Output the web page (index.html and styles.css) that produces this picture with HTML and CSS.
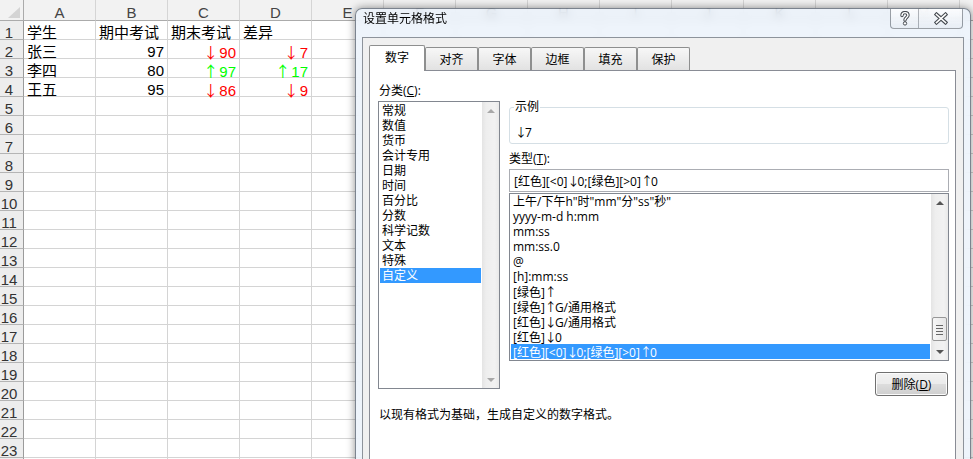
FILE: index.html
```html
<!DOCTYPE html>
<html lang="zh-CN">
<head>
<meta charset="utf-8">
<title>设置单元格格式</title>
<link rel="stylesheet" href="styles.css">
</head>
<body>
<div class="sheet">
  <div class="corner"></div>
  <div class="ch">A</div><div class="ch">B</div><div class="ch">C</div><div class="ch">D</div><div class="ch">E</div><div class="ch">F</div><div class="ch">G</div><div class="ch">H</div><div class="ch">I</div><div class="ch">J</div><div class="ch">K</div><div class="ch">L</div><div class="ch">M</div><div class="ch">N</div>

  <div class="rh">1</div><div>学生</div><div>期中考试</div><div>期末考试</div><div>差异</div><div></div><div></div><div></div><div></div><div></div><div></div><div></div><div></div><div></div><div></div>
  <div class="rh">2</div><div>张三</div><div class="n">97</div><div class="n red"><span class="ar">↓</span>90</div><div class="n red"><span class="ar">↓</span>7</div><div></div><div></div><div></div><div></div><div></div><div></div><div></div><div></div><div></div><div></div>
  <div class="rh">3</div><div>李四</div><div class="n">80</div><div class="n green"><span class="ar">↑</span>97</div><div class="n green"><span class="ar">↑</span>17</div><div></div><div></div><div></div><div></div><div></div><div></div><div></div><div></div><div></div><div></div>
  <div class="rh">4</div><div>王五</div><div class="n">95</div><div class="n red"><span class="ar">↓</span>86</div><div class="n red"><span class="ar">↓</span>9</div><div></div><div></div><div></div><div></div><div></div><div></div><div></div><div></div><div></div><div></div>
  <div class="rh">5</div><div></div><div></div><div></div><div></div><div></div><div></div><div></div><div></div><div></div><div></div><div></div><div></div><div></div><div></div>
  <div class="rh">6</div><div></div><div></div><div></div><div></div><div></div><div></div><div></div><div></div><div></div><div></div><div></div><div></div><div></div><div></div>
  <div class="rh">7</div><div></div><div></div><div></div><div></div><div></div><div></div><div></div><div></div><div></div><div></div><div></div><div></div><div></div><div></div>
  <div class="rh">8</div><div></div><div></div><div></div><div></div><div></div><div></div><div></div><div></div><div></div><div></div><div></div><div></div><div></div><div></div>
  <div class="rh">9</div><div></div><div></div><div></div><div></div><div></div><div></div><div></div><div></div><div></div><div></div><div></div><div></div><div></div><div></div>
  <div class="rh">10</div><div></div><div></div><div></div><div></div><div></div><div></div><div></div><div></div><div></div><div></div><div></div><div></div><div></div><div></div>
  <div class="rh">11</div><div></div><div></div><div></div><div></div><div></div><div></div><div></div><div></div><div></div><div></div><div></div><div></div><div></div><div></div>
  <div class="rh">12</div><div></div><div></div><div></div><div></div><div></div><div></div><div></div><div></div><div></div><div></div><div></div><div></div><div></div><div></div>
  <div class="rh">13</div><div></div><div></div><div></div><div></div><div></div><div></div><div></div><div></div><div></div><div></div><div></div><div></div><div></div><div></div>
  <div class="rh">14</div><div></div><div></div><div></div><div></div><div></div><div></div><div></div><div></div><div></div><div></div><div></div><div></div><div></div><div></div>
  <div class="rh">15</div><div></div><div></div><div></div><div></div><div></div><div></div><div></div><div></div><div></div><div></div><div></div><div></div><div></div><div></div>
  <div class="rh">16</div><div></div><div></div><div></div><div></div><div></div><div></div><div></div><div></div><div></div><div></div><div></div><div></div><div></div><div></div>
  <div class="rh">17</div><div></div><div></div><div></div><div></div><div></div><div></div><div></div><div></div><div></div><div></div><div></div><div></div><div></div><div></div>
  <div class="rh">18</div><div></div><div></div><div></div><div></div><div></div><div></div><div></div><div></div><div></div><div></div><div></div><div></div><div></div><div></div>
  <div class="rh">19</div><div></div><div></div><div></div><div></div><div></div><div></div><div></div><div></div><div></div><div></div><div></div><div></div><div></div><div></div>
  <div class="rh">20</div><div></div><div></div><div></div><div></div><div></div><div></div><div></div><div></div><div></div><div></div><div></div><div></div><div></div><div></div>
  <div class="rh">21</div><div></div><div></div><div></div><div></div><div></div><div></div><div></div><div></div><div></div><div></div><div></div><div></div><div></div><div></div>
  <div class="rh">22</div><div></div><div></div><div></div><div></div><div></div><div></div><div></div><div></div><div></div><div></div><div></div><div></div><div></div><div></div>
  <div class="rh">23</div><div></div><div></div><div></div><div></div><div></div><div></div><div></div><div></div><div></div><div></div><div></div><div></div><div></div><div></div>
  <div class="rh">24</div><div></div><div></div><div></div><div></div><div></div><div></div><div></div><div></div><div></div><div></div><div></div><div></div><div></div><div></div>
</div>

<div class="dialog">
  <div class="titlebar">
    <span class="title">设置单元格格式</span>
    <div class="caps">
      <div class="cap help">
        <svg width="12" height="15" viewBox="0 0 12 15">
          <path d="M3 4.6 C3 2.6 4.4 1.6 6 1.6 C7.8 1.6 9 2.7 9 4.3 C9 6.4 6 6.7 6 9" fill="none" stroke="#474c52" stroke-width="3.4" stroke-linecap="round"/>
          <path d="M3 4.6 C3 2.6 4.4 1.6 6 1.6 C7.8 1.6 9 2.7 9 4.3 C9 6.4 6 6.7 6 9" fill="none" stroke="#fff" stroke-width="1.4" stroke-linecap="round"/>
          <circle cx="6" cy="12.4" r="1.7" fill="#fff" stroke="#474c52" stroke-width="1"/>
        </svg>
      </div>
      <div class="cap close">
        <svg width="14" height="13" viewBox="0 0 14 13">
          <path d="M2.5 2.5 L11.5 10.5 M11.5 2.5 L2.5 10.5" stroke="#474c52" stroke-width="3.8" stroke-linecap="square"/>
          <path d="M2.5 2.5 L11.5 10.5 M11.5 2.5 L2.5 10.5" stroke="#fff" stroke-width="1.6" stroke-linecap="square"/>
        </svg>
      </div>
    </div>
  </div>
  <div class="client">
    <div class="tabs">
      <div class="tab sel">数字</div>
      <div class="tab">对齐</div>
      <div class="tab">字体</div>
      <div class="tab">边框</div>
      <div class="tab">填充</div>
      <div class="tab">保护</div>
    </div>
    <div class="page">
      <div class="cols">
        <div class="left">
          <div class="lbl">分类(<u>C</u>):</div>
          <div class="listbox cat">
            <ul class="items">
              <li>常规</li>
              <li>数值</li>
              <li>货币</li>
              <li>会计专用</li>
              <li>日期</li>
              <li>时间</li>
              <li>百分比</li>
              <li>分数</li>
              <li>科学记数</li>
              <li>文本</li>
              <li>特殊</li>
              <li class="sel">自定义</li>
            </ul>
            <div class="vscroll disabled">
              <span class="sb-btn up"></span>
              <span class="track"></span>
              <span class="sb-btn down"></span>
            </div>
          </div>
        </div>
        <div class="right">
          <fieldset class="sample">
            <legend>示例</legend>
            <div class="sample-val"><span class="ar">↓</span>7</div>
          </fieldset>
          <div class="lbl type-lbl">类型(<u>T</u>):</div>
          <div class="input">[红色][&lt;0]<span class="ar">↓</span>0;[绿色][&gt;0]<span class="ar">↑</span>0</div>
          <div class="listbox types">
            <ul class="items">
              <li>上午/下午h"时"mm"分"ss"秒"</li>
              <li>yyyy-m-d h:mm</li>
              <li>mm:ss</li>
              <li>mm:ss.0</li>
              <li>@</li>
              <li>[h]:mm:ss</li>
              <li>[绿色]<span class="ar">↑</span></li>
              <li>[绿色]<span class="ar">↑</span>G/通用格式</li>
              <li>[红色]<span class="ar">↓</span>G/通用格式</li>
              <li>[红色]<span class="ar">↓</span>0</li>
              <li class="sel">[红色][&lt;0]<span class="ar">↓</span>0;[绿色][&gt;0]<span class="ar">↑</span>0</li>
            </ul>
            <div class="vscroll">
              <span class="sb-btn up"></span>
              <span class="track"><span class="thumb"></span></span>
              <span class="sb-btn down"></span>
            </div>
          </div>
          <div class="btnrow"><button class="btn">删除(<u>D</u>)</button></div>
        </div>
      </div>
      <p class="hint">以现有格式为基础，生成自定义的数字格式。</p>
    </div>
  </div>
</div>
</body>
</html>
```

FILE: styles.css
```css
html, body {
  margin: 0;
  padding: 0;
}
body {
  width: 973px;
  height: 459px;
  overflow: hidden;
  position: relative;
  background: #fff;
  font-family: "Liberation Sans", "Noto Sans CJK SC", sans-serif;
}

/* ---------- spreadsheet ---------- */
.sheet {
  display: grid;
  grid-template-columns: 24px repeat(14, 72px);
  grid-template-rows: 21px;
  grid-auto-rows: 19px;
  font-size: 15px;
  color: #000;
}
.sheet > div {
  box-sizing: border-box;
  border-right: 1px solid #d4d4d4;
  border-bottom: 1px solid #d4d4d4;
  padding: 4px 3px 0;
  line-height: 15px;
  white-space: nowrap;
}
.sheet > .corner {
  background: #f2f2f2;
  border-right-color: #ababab;
  border-bottom-color: #ababab;
  position: relative;
}
.corner::after {
  content: "";
  position: absolute;
  right: 3px;
  bottom: 2px;
  width: 12px;
  height: 11px;
  background: #d4d4d4;
  clip-path: polygon(100% 0, 100% 100%, 0 100%);
}
.sheet > .ch {
  background: #f2f2f2;
  text-align: center;
  font-size: 15px;
  color: #444;
  padding: 5px 0 0;
  line-height: 16px;
  border-right-color: #d5d5d5;
  border-bottom-color: #ababab;
}
.sheet > .rh {
  background: #ededed;
  text-align: center;
  font-size: 15px;
  color: #333;
  padding: 4px 5px 0 0;
  border-right-color: #9b9b9b;
  border-bottom-color: #b4b4b4;
}
.sheet > .n { text-align: right; }
.red { color: #ff0000; }
.green { color: #00ff00; }

/* tall arrow glyphs */
.ar {
  font-family: "Noto Sans CJK SC", sans-serif;
}
.sheet .ar {
  letter-spacing: 1px;
}
.dialog .ar {
  letter-spacing: -2px;
}

/* ---------- dialog ---------- */
.dialog {
  position: absolute;
  left: 355px;
  top: 8px;
  width: 616px;
  height: 470px;
  box-sizing: border-box;
  border: 1px solid rgba(30, 40, 55, 0.55);
  border-radius: 7px 7px 0 0;
  background: rgba(234, 242, 250, 0.82);
  backdrop-filter: blur(4px);
  box-shadow: 0 0 9px rgba(0, 0, 0, 0.45);
  font-family: "Open Sans", "Noto Sans CJK SC", sans-serif;
  font-size: 12px;
  color: #000;
  display: flex;
  flex-direction: column;
}
.titlebar {
  height: 28px;
  flex: none;
  display: flex;
  align-items: flex-start;
  padding-left: 7px;
}
.title {
  line-height: 20px;
}
.caps {
  margin-left: auto;
  margin-right: 7px;
  display: flex;
  height: 20px;
  box-sizing: border-box;
  border: 1px solid rgba(40, 50, 60, 0.45);
  border-top: none;
  border-radius: 0 0 4px 4px;
  background: linear-gradient(rgba(255, 255, 255, 0.75), rgba(228, 234, 241, 0.65));
  overflow: hidden;
}
.cap {
  width: 27px;
  display: flex;
  align-items: center;
  justify-content: center;
}
.cap.close {
  width: 43px;
  border-left: 1px solid rgba(40, 50, 60, 0.35);
}

.client {
  margin: 0 6px;
  border: 1px solid #8d939b;
  background: #f0f0f0;
  padding: 7px 7px 0 6px;
  flex: 1;
  display: flex;
  flex-direction: column;
}
.tabs {
  display: flex;
  align-items: flex-end;
  height: 25px;
  flex: none;
  position: relative;
  z-index: 1;
}
.tab {
  box-sizing: border-box;
  width: 53px;
  height: 23px;
  border: 1px solid #8e8f8f;
  border-bottom: none;
  border-radius: 2px 2px 0 0;
  background: linear-gradient(#f7f7f7, #e2e2e2);
  text-align: center;
  line-height: 21px;
  padding-top: 1px;
}
.tab.sel {
  width: 56px;
  height: 26px;
  margin-bottom: -1px;
  background: #fff;
  line-height: 23px;
  padding-top: 0;
}
.page {
  background: #fff;
  border: 1px solid #898c95;
  flex: 1;
  padding: 12px 0 0 8px;
}
.cols {
  display: flex;
  align-items: flex-start;
}
.left {
  width: 122px;
}
.lbl {
  line-height: 15px;
  padding-left: 1px;
}
.listbox {
  box-sizing: border-box;
  border: 1px solid #828790;
  background: #fff;
  display: flex;
}
.cat {
  height: 288px;
  margin-top: 3px;
}
.items {
  list-style: none;
  margin: 0;
  padding: 1px;
  flex: 1;
  min-width: 0;
}
.items li {
  line-height: 15px;
  height: 15px;
  padding-left: 2px;
  white-space: nowrap;
}
.items li.sel {
  background: #3399ff;
  color: #fff;
}
.types .items {
  padding: 0 1px;
}
.vscroll {
  width: 17px;
  flex: none;
  display: flex;
  flex-direction: column;
  background: linear-gradient(to right, #e4e4e4, #eeeeee 25%, #f2f2f2 75%, #e9e9e9);
}
.sb-btn {
  height: 17px;
  flex: none;
  display: flex;
  align-items: center;
  justify-content: center;
}
.sb-btn::before {
  content: "";
  width: 0;
  height: 0;
  border-left: 4px solid transparent;
  border-right: 4px solid transparent;
}
.sb-btn.up::before { border-bottom: 4px solid #555; }
.sb-btn.down::before { border-top: 4px solid #555; }
.disabled .sb-btn.up::before { border-bottom-color: #a8a8a8; }
.disabled .sb-btn.down::before { border-top-color: #a8a8a8; }
.track {
  flex: 1;
  display: flex;
  flex-direction: column;
}
.thumb {
  margin: 106px 1px 0;
  height: 24px;
  box-sizing: border-box;
  border: 1px solid #979797;
  border-radius: 2px;
  background:
    linear-gradient(#666, #666) center 7px / 7px 1px no-repeat,
    linear-gradient(#666, #666) center 10px / 7px 1px no-repeat,
    linear-gradient(#666, #666) center 13px / 7px 1px no-repeat,
    linear-gradient(#666, #666) center 16px / 7px 1px no-repeat,
    linear-gradient(to right, #f6f6f6, #e6e6e6);
}

.right {
  width: 440px;
  margin-left: 9px;
}
.sample {
  margin: 17px 0 0;
  padding: 10px 0 4px 0;
  border: 1px solid #d5dfe5;
  border-radius: 3px;
  min-width: 0;
}
.sample legend {
  margin-left: 4px;
  padding: 0 1px;
  line-height: 14px;
}
.sample-val {
  line-height: 15px;
  height: 15px;
  padding-left: 5px;
}
.type-lbl {
  margin-top: 7px;
  padding-left: 0;
}
.input {
  margin-top: 3px;
  height: 23px;
  box-sizing: border-box;
  border: 1px solid #abadb3;
  padding-left: 4px;
  line-height: 21px;
  white-space: nowrap;
}
.types {
  margin-top: 1px;
  height: 168px;
}
.btnrow {
  display: flex;
  justify-content: flex-end;
  margin-top: 11px;
  padding-right: 1px;
}
.btn {
  width: 73px;
  height: 24px;
  font: inherit;
  color: #000;
  border: 1px solid #707070;
  border-radius: 3px;
  background: linear-gradient(#f2f2f2, #ebebeb 50%, #dddddd 50%, #cfcfcf);
  box-shadow: inset 0 0 0 1px #fbfbfb;
  padding: 0;
}
.hint {
  margin: 11px 0 0 1px;
  line-height: 15px;
}
```
